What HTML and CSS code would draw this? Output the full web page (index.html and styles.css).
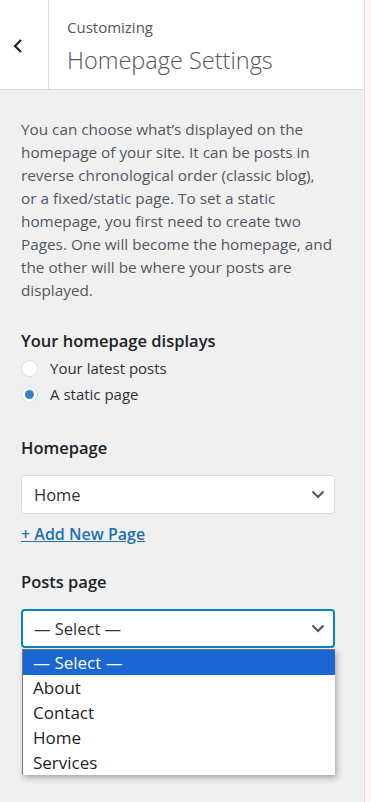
FILE: index.html
```html
<!DOCTYPE html>
<html lang="en">
<head>
    <meta charset="UTF-8">
    <meta name="viewport" content="width=device-width, initial-scale=1.0">
    <title>Homepage Settings</title>
    <link rel="stylesheet" href="styles.css">
</head>
<body>
    <div class="sidebar">
        <div class="panel-header">
            <button class="back-btn" aria-label="Back">
                <svg width="12" height="16" viewBox="0 0 12 16"><path d="M9 2 L3 8 L9 14" fill="none" stroke="#1d2327" stroke-width="2.2"/></svg>
            </button>
            <div class="panel-title">
                <span class="crumb">Customizing</span>
                <h2>Homepage Settings</h2>
            </div>
        </div>

        <div class="panel-body">
            <p class="description">You can choose what’s displayed on the homepage of your site. It can be posts in reverse chronological order (classic blog), or&nbsp;a fixed/static page. To set a static homepage, you first need to create two Pages. One will become the homepage, and the other will be where your posts are displayed.</p>

            <div class="control">
                <span class="control-title">Your homepage displays</span>
                <label class="radio-row"><span class="radio"></span>Your latest posts</label>
                <label class="radio-row"><span class="radio checked"></span>A static page</label>
            </div>

            <div class="control">
                <span class="control-title spaced">Homepage</span>
                <div class="select">
                    <span>Home</span>
                    <svg class="chevron" width="14" height="9" viewBox="0 0 14 9"><path d="M1.5 1.5 L7 7 L12.5 1.5" fill="none" stroke="#50575e" stroke-width="2"/></svg>
                </div>
                <a class="add-link" href="#">+ Add New Page</a>
            </div>

            <div class="control">
                <span class="control-title spaced">Posts page</span>
                <div class="select-wrap">
                    <div class="select focused">
                        <span>— Select —</span>
                        <svg class="chevron" width="14" height="9" viewBox="0 0 14 9"><path d="M1.5 1.5 L7 7 L12.5 1.5" fill="none" stroke="#50575e" stroke-width="2"/></svg>
                    </div>
                    <ul class="dropdown">
                        <li class="active">— Select —</li>
                        <li>About</li>
                        <li>Contact</li>
                        <li>Home</li>
                        <li>Services</li>
                    </ul>
                </div>
            </div>
        </div>
    </div>
    <div class="preview"></div>
</body>
</html>
```

FILE: styles.css
```css
* {
    box-sizing: border-box;
    margin: 0;
    padding: 0;
}

body {
    font-family: 'Open Sans', 'Noto Sans', sans-serif;
    display: flex;
    height: 100vh;
    background: #fff5f5;
    color: #3c434a;
}

.sidebar {
    width: 365px;
    flex-shrink: 0;
    background: #f0f0f1;
    border-right: 1px solid #dcdcde;
    display: flex;
    flex-direction: column;
}

.panel-header {
    display: flex;
    height: 90px;
    background: white;
    border-bottom: 1px solid #dcdcde;
}

.back-btn {
    width: 49px;
    border: none;
    border-right: 1px solid #dcdcde;
    background: white;
    display: flex;
    align-items: center;
    padding: 2px 0 0 12px;
}

.panel-title {
    padding: 15px 0 0 18px;
    color: #50575e;
}

.crumb {
    display: block;
    font-size: 15px;
    line-height: 24px;
}

.panel-title h2 {
    font-size: 23.5px;
    font-weight: 300;
    line-height: 34px;
    margin-top: 4px;
}

.panel-body {
    padding: 28px 20px 0 21px;
}

.description {
    font-size: 15.3px;
    line-height: 23px;
    color: #50575e;
    max-width: 315px;
    margin-bottom: 28px;
}

.control {
    margin-bottom: 26px;
}

.control-title {
    display: block;
    font-size: 16.5px;
    font-weight: 600;
    color: #1d2327;
    line-height: 22px;
    margin-bottom: 3px;
}

.control-title.spaced {
    margin-bottom: 16px;
}

.radio-row {
    display: flex;
    align-items: center;
    gap: 12px;
    font-size: 15px;
    line-height: 26px;
    color: #2c3338;
}

.radio {
    width: 17px;
    height: 17px;
    border: 1px solid #dcdcde;
    border-radius: 50%;
    background: white;
    display: flex;
    align-items: center;
    justify-content: center;
}

.radio.checked::after {
    content: "";
    width: 9px;
    height: 9px;
    border-radius: 50%;
    background: #3582c4;
}

.control:nth-child(2) {
    margin-bottom: 30px;
}

.select {
    display: flex;
    align-items: center;
    justify-content: space-between;
    width: 314px;
    height: 39px;
    padding: 0 9px 0 12px;
    background: white;
    border: 1px solid #dcdcde;
    border-radius: 4px;
    font-size: 16.5px;
    color: #2c3338;
}

.select.focused {
    border: 2px solid #0a84c6;
    padding-left: 11px;
    padding-right: 8px;
}

.add-link {
    display: inline-block;
    margin-top: 10px;
    font-size: 16px;
    font-weight: 600;
    color: #2271b1;
    line-height: 20px;
}

.select-wrap {
    position: relative;
}

.dropdown {
    position: absolute;
    left: 1px;
    top: 40px;
    width: 313px;
    list-style: none;
    background: white;
    border-left: 1px solid #767676;
    border-top: 1px solid #767676;
    box-shadow: 2px 3px 6px rgba(0, 0, 0, 0.3);
    font-size: 17px;
    color: #1d2327;
}

.dropdown li {
    height: 25px;
    line-height: 25px;
    padding-left: 10px;
}

.dropdown li.active {
    background: #1a66d2;
    color: white;
}

.preview {
    flex: 1;
}
```
